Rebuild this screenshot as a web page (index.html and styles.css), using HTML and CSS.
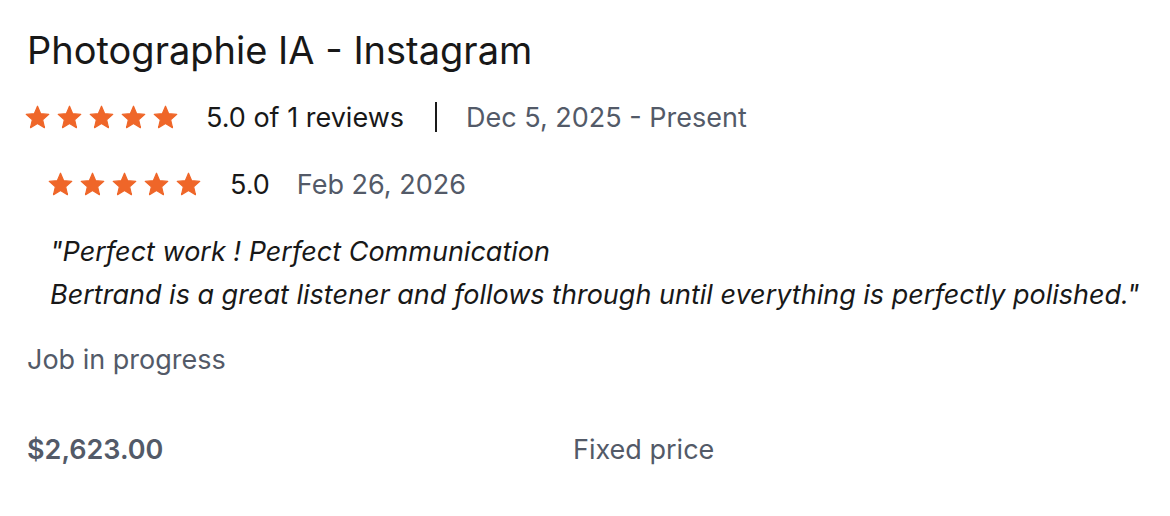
FILE: index.html
```html
<!DOCTYPE html>
<html lang="en">
<head>
<meta charset="utf-8">
<title>Photographie IA - Instagram</title>
<link rel="stylesheet" href="styles.css">
</head>
<body>
<section class="job">
  <h1 class="job-title">Photographie IA - Instagram</h1>

  <div class="summary">
    <div class="stars">
      <svg viewBox="0 0 24 24"><path d="M12 17.27L18.18 21l-1.64-7.03L22 9.24l-7.19-.61L12 2 9.19 8.63 2 9.24l5.46 4.73L5.82 21z"/></svg>
      <svg viewBox="0 0 24 24"><path d="M12 17.27L18.18 21l-1.64-7.03L22 9.24l-7.19-.61L12 2 9.19 8.63 2 9.24l5.46 4.73L5.82 21z"/></svg>
      <svg viewBox="0 0 24 24"><path d="M12 17.27L18.18 21l-1.64-7.03L22 9.24l-7.19-.61L12 2 9.19 8.63 2 9.24l5.46 4.73L5.82 21z"/></svg>
      <svg viewBox="0 0 24 24"><path d="M12 17.27L18.18 21l-1.64-7.03L22 9.24l-7.19-.61L12 2 9.19 8.63 2 9.24l5.46 4.73L5.82 21z"/></svg>
      <svg viewBox="0 0 24 24"><path d="M12 17.27L18.18 21l-1.64-7.03L22 9.24l-7.19-.61L12 2 9.19 8.63 2 9.24l5.46 4.73L5.82 21z"/></svg>
    </div>
    <span class="score">5.0 of 1 reviews</span>
    <span class="divider"></span>
    <span class="muted">Dec 5, 2025 - Present</span>
  </div>

  <div class="review">
    <div class="review-head">
      <div class="stars">
        <svg viewBox="0 0 24 24"><path d="M12 17.27L18.18 21l-1.64-7.03L22 9.24l-7.19-.61L12 2 9.19 8.63 2 9.24l5.46 4.73L5.82 21z"/></svg>
        <svg viewBox="0 0 24 24"><path d="M12 17.27L18.18 21l-1.64-7.03L22 9.24l-7.19-.61L12 2 9.19 8.63 2 9.24l5.46 4.73L5.82 21z"/></svg>
        <svg viewBox="0 0 24 24"><path d="M12 17.27L18.18 21l-1.64-7.03L22 9.24l-7.19-.61L12 2 9.19 8.63 2 9.24l5.46 4.73L5.82 21z"/></svg>
        <svg viewBox="0 0 24 24"><path d="M12 17.27L18.18 21l-1.64-7.03L22 9.24l-7.19-.61L12 2 9.19 8.63 2 9.24l5.46 4.73L5.82 21z"/></svg>
        <svg viewBox="0 0 24 24"><path d="M12 17.27L18.18 21l-1.64-7.03L22 9.24l-7.19-.61L12 2 9.19 8.63 2 9.24l5.46 4.73L5.82 21z"/></svg>
      </div>
      <span class="score">5.0</span>
      <span class="muted">Feb 26, 2026</span>
    </div>
    <p class="quote">"Perfect work ! Perfect Communication<br>Bertrand is a great listener and follows through until everything is perfectly polished."</p>
  </div>

  <p class="status">Job in progress</p>

  <div class="terms">
    <span class="price">$2,623.00</span>
    <span class="muted">Fixed price</span>
  </div>
</section>
</body>
</html>
```

FILE: styles.css
```css
html, body {
  margin: 0;
  padding: 0;
  background: #ffffff;
}

body {
  font-family: Inter, "Liberation Sans", Arial, sans-serif;
  color: #181818;
  font-size: 27px;
}

.job {
  padding: 26px 0 0 27px;
}

.job-title {
  margin: 0;
  font-size: 38px;
  font-weight: 400;
  line-height: 48px;
  color: #181818;
}

.summary {
  display: flex;
  align-items: center;
  height: 36px;
  margin-top: 25px;
}

.stars {
  display: flex;
  gap: 5px;
  margin-left: -3px;
}

.stars svg {
  width: 27px;
  height: 27px;
  fill: #ef6629;
  stroke: #ef6629;
  stroke-width: 1.1;
  stroke-linejoin: round;
}

.summary .score {
  margin-left: 27px;
}

.divider {
  width: 2px;
  height: 30px;
  background: #1a1a1a;
  margin: 0 29px 0 31px;
}

.muted {
  color: #535a68;
}

.review {
  padding-left: 23px;
}

.review-head {
  display: flex;
  align-items: center;
  height: 36px;
  margin-top: 31px;
}

.review-head .score {
  margin-left: 28px;
  margin-right: 27px;
}

.quote {
  margin: 28px 0 0;
  font-style: italic;
  line-height: 43px;
  color: #181818;
}

.status {
  margin: 26px 0 0;
  line-height: 36px;
  color: #535a68;
}

.terms {
  display: grid;
  grid-template-columns: 546px auto;
  margin-top: 54px;
  line-height: 36px;
}

.price {
  font-weight: 600;
  color: #535a68;
}
```
